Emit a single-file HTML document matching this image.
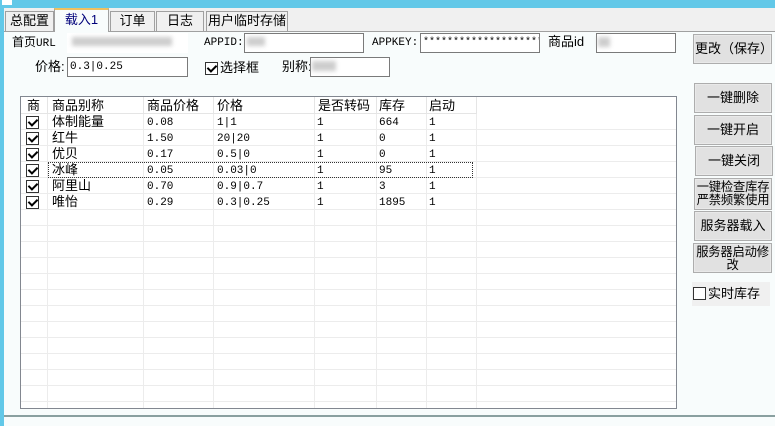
<!DOCTYPE html>
<html><head><meta charset="utf-8"><style>
*{margin:0;padding:0;box-sizing:border-box}
body{width:775px;height:426px;overflow:hidden;background:#f0f0f0;position:relative;font-family:"Liberation Sans","Noto Sans CJK SC",sans-serif;font-size:12px;color:#000}
.a{position:absolute;white-space:nowrap;line-height:14px}
.tab{position:absolute;top:11px;height:20px;border:1px solid #a0a0a0;border-bottom:none;background:#f0f0f0;text-align:center;line-height:18px;font-size:13px}
.tb{position:absolute;height:20px;border:1px solid #7a7a7a;background:#fff;font-size:12px;line-height:18px;padding-left:2px;overflow:hidden}
.mono{font-family:"Liberation Mono","Noto Sans CJK SC",monospace;font-size:11px}
.btn{position:absolute;border:1px solid #adadad;background:#e1e1e1;text-align:center;font-size:13px;line-height:28px;box-shadow:inset 0 0 0 1px #e9e9e9;white-space:nowrap;overflow:hidden}
.cb{position:absolute;width:13px;height:13px;border:1px solid #333;background:#fff}
.cb.on::after{content:"";position:absolute;left:3px;top:0px;width:4px;height:7px;border:solid #000;border-width:0 2px 2px 0;transform:rotate(45deg)}
.blur{position:absolute;background:#b8b8b8;filter:blur(2px);opacity:.7}
</style></head><body>
<div style="position:absolute;left:0;top:0;width:775px;height:8px;background:#62c8e8"></div>
<div style="position:absolute;left:0;top:0;width:4px;height:426px;background:#62c8e8"></div>
<div style="position:absolute;left:2px;top:0;width:10px;height:5px;background:#fff"></div>
<div style="position:absolute;left:4px;top:8px;width:771px;height:409px;background:#f0f0f0"></div>
<div style="position:absolute;left:4px;top:31px;width:771px;height:384px;background:#f8fcfc;border-top:1px solid #a0a0a0"></div>
<div style="position:absolute;left:4px;top:415px;width:771px;height:2px;background:#8aa0a0"></div>
<div style="position:absolute;left:4px;top:417px;width:771px;height:9px;background:#f8fcfc"></div>
<div class="tab" style="left:5px;width:49px">总配置</div>
<div class="tab" style="left:110px;width:45px">订单</div>
<div class="tab" style="left:156px;width:48px">日志</div>
<div class="tab" style="left:206px;width:82px">用户临时存储</div>
<div class="tab" style="left:54px;top:8px;height:24px;width:55px;background:#f8fcfc;border-top:2px solid #f0c060;color:#00007a;line-height:20px">载入1</div>
<div class="a" style="left:12px;top:35px;font-size:12px">首页<span class="mono">URL</span></div>
<div class="tb" style="left:67px;top:33px;width:121px;border-color:#fff"></div>
<div class="blur" style="left:72px;top:37px;width:100px;height:9px"></div>
<div class="a mono" style="left:204px;top:36px">APPID:</div>
<div class="tb" style="left:244px;top:33px;width:120px"></div>
<div class="blur" style="left:247px;top:37px;width:18px;height:9px"></div>
<div class="a mono" style="left:372px;top:36px">APPKEY:</div>
<div class="tb mono" style="left:420px;top:33px;width:120px;font-size:10px">********************</div>
<div class="a" style="left:548px;top:35px;font-size:13px">商品id</div>
<div class="tb" style="left:596px;top:33px;width:80px"></div>
<div class="blur" style="left:598px;top:37px;width:12px;height:10px"></div>
<div class="btn" style="left:693px;top:34px;width:79px;height:30px;text-align:left;padding-left:1px">更改（保存）</div>
<div class="a" style="left:35px;top:60px;font-size:13px">价格:</div>
<div class="tb mono" style="left:67px;top:57px;width:121px">0.3|0.25</div>
<div class="cb on" style="left:205px;top:62px"></div>
<div class="a" style="left:220px;top:61px;font-size:13px">选择框</div>
<div class="a" style="left:282px;top:60px;font-size:13px">别称:</div>
<div class="tb" style="left:310px;top:57px;width:80px"></div>
<div class="blur" style="left:312px;top:61px;width:24px;height:10px"></div>
<div style="position:absolute;left:20px;top:96px;width:657px;height:313px;border:1px solid #828790;background:#fff;overflow:hidden">
 <div style="position:absolute;left:0;top:17px;width:655px;height:300px;background-image:linear-gradient(#ececec 1px,transparent 1px);background-size:100% 16px;background-position:0 -1px"></div>
 <div style="position:absolute;left:26px;top:0;width:1px;height:313px;background:#ececec"></div>
 <div style="position:absolute;left:122px;top:0;width:1px;height:313px;background:#ececec"></div>
 <div style="position:absolute;left:192px;top:0;width:1px;height:313px;background:#ececec"></div>
 <div style="position:absolute;left:293px;top:0;width:1px;height:313px;background:#ececec"></div>
 <div style="position:absolute;left:355px;top:0;width:1px;height:313px;background:#ececec"></div>
 <div style="position:absolute;left:405px;top:0;width:1px;height:313px;background:#ececec"></div>
 <div style="position:absolute;left:455px;top:0;width:1px;height:313px;background:#ececec"></div>
 <div style="position:absolute;left:0;top:0;width:455px;height:17px;background:#fff;border-bottom:1px solid #e5e5e5"></div>
 <div style="position:absolute;left:0;top:0;width:456px;height:17px;background:linear-gradient(90deg,transparent 26px,#e5e5e5 26px,#e5e5e5 27px,transparent 27px,transparent 122px,#e5e5e5 122px,#e5e5e5 123px,transparent 123px,transparent 192px,#e5e5e5 192px,#e5e5e5 193px,transparent 193px,transparent 293px,#e5e5e5 293px,#e5e5e5 294px,transparent 294px,transparent 355px,#e5e5e5 355px,#e5e5e5 356px,transparent 356px,transparent 405px,#e5e5e5 405px,#e5e5e5 406px,transparent 406px,transparent 455px,#e5e5e5 455px)"></div>
 <div class="a" style="left:6px;top:2px;font-size:13px">商</div>
 <div class="a" style="left:31px;top:2px;font-size:13px">商品别称</div>
 <div class="a" style="left:126px;top:2px;font-size:13px">商品价格</div>
 <div class="a" style="left:196px;top:2px;font-size:13px">价格</div>
 <div class="a" style="left:297px;top:2px;font-size:13px">是否转码</div>
 <div class="a" style="left:358px;top:2px;font-size:13px">库存</div>
 <div class="a" style="left:408px;top:2px;font-size:13px">启动</div>
 <div style="position:absolute;left:27px;top:65px;width:425px;height:16px;border:1px dotted #333"></div>
</div>
<div class="cb on" style="left:26px;top:116px"></div><div class="a" style="left:52px;top:115px;font-size:13px">体制能量</div><div class="a mono" style="left:147px;top:116px">0.08</div><div class="a mono" style="left:217px;top:116px">1|1</div><div class="a mono" style="left:317px;top:116px">1</div><div class="a mono" style="left:379px;top:116px">664</div><div class="a mono" style="left:429px;top:116px">1</div>
<div class="cb on" style="left:26px;top:132px"></div><div class="a" style="left:52px;top:131px;font-size:13px">红牛</div><div class="a mono" style="left:147px;top:132px">1.50</div><div class="a mono" style="left:217px;top:132px">20|20</div><div class="a mono" style="left:317px;top:132px">1</div><div class="a mono" style="left:379px;top:132px">0</div><div class="a mono" style="left:429px;top:132px">1</div>
<div class="cb on" style="left:26px;top:148px"></div><div class="a" style="left:52px;top:147px;font-size:13px">优贝</div><div class="a mono" style="left:147px;top:148px">0.17</div><div class="a mono" style="left:217px;top:148px">0.5|0</div><div class="a mono" style="left:317px;top:148px">1</div><div class="a mono" style="left:379px;top:148px">0</div><div class="a mono" style="left:429px;top:148px">1</div>
<div class="cb on" style="left:26px;top:164px"></div><div class="a" style="left:52px;top:163px;font-size:13px">冰峰</div><div class="a mono" style="left:147px;top:164px">0.05</div><div class="a mono" style="left:217px;top:164px">0.03|0</div><div class="a mono" style="left:317px;top:164px">1</div><div class="a mono" style="left:379px;top:164px">95</div><div class="a mono" style="left:429px;top:164px">1</div>
<div class="cb on" style="left:26px;top:180px"></div><div class="a" style="left:52px;top:179px;font-size:13px">阿里山</div><div class="a mono" style="left:147px;top:180px">0.70</div><div class="a mono" style="left:217px;top:180px">0.9|0.7</div><div class="a mono" style="left:317px;top:180px">1</div><div class="a mono" style="left:379px;top:180px">3</div><div class="a mono" style="left:429px;top:180px">1</div>
<div class="cb on" style="left:26px;top:196px"></div><div class="a" style="left:52px;top:195px;font-size:13px">唯怡</div><div class="a mono" style="left:147px;top:196px">0.29</div><div class="a mono" style="left:217px;top:196px">0.3|0.25</div><div class="a mono" style="left:317px;top:196px">1</div><div class="a mono" style="left:379px;top:196px">1895</div><div class="a mono" style="left:429px;top:196px">1</div>
<div class="btn" style="left:694px;top:83px;width:78px;height:30px">一键删除</div>
<div class="btn" style="left:694px;top:115px;width:78px;height:30px">一键开启</div>
<div class="btn" style="left:695px;top:146px;width:78px;height:30px">一键关闭</div>
<div class="btn" style="left:694px;top:178px;width:78px;height:32px;line-height:13px;padding-top:2px;font-size:12.3px;letter-spacing:-0.2px">一键检查库存<br>严禁频繁使用</div>
<div class="btn" style="left:694px;top:211px;width:78px;height:30px">服务器载入</div>
<div class="btn" style="left:693px;top:243px;width:79px;height:30px;line-height:13px;padding-top:2px;font-size:12.3px;letter-spacing:-0.2px">服务器启动修<br>改</div>
<div style="position:absolute;left:692px;top:282px;width:78px;height:24px;background:#f0f0f0"></div>
<div class="cb" style="left:693px;top:287px"></div>
<div class="a" style="left:708px;top:287px;font-size:13px">实时库存</div>
</body></html>
